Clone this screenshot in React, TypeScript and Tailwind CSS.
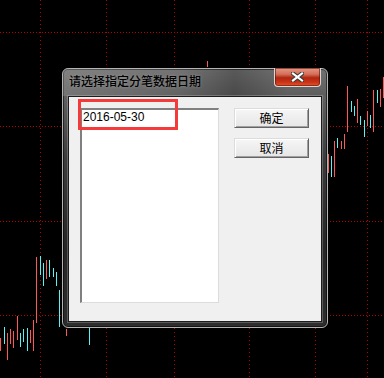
import React from 'react';

type Bar = [number, number, number, 'r' | 'c'];

// candlestick wicks seen around the dialog: x, top, bottom, colour
const bars: Bar[] = [
  [0, 338, 351, 'r'],
  [4, 327, 344, 'c'],
  [7, 333, 360, 'r'],
  [10, 329, 344, 'r'],
  [13, 331, 348, 'r'],
  [17, 316, 340, 'r'],
  [20, 333, 347, 'c'],
  [23, 329, 342, 'c'],
  [27, 328, 351, 'c'],
  [30, 330, 343, 'r'],
  [33, 320, 351, 'r'],
  [36, 257, 323, 'r'],
  [40, 256, 275, 'c'],
  [43, 263, 286, 'c'],
  [46, 260, 279, 'r'],
  [49, 260, 277, 'c'],
  [53, 268, 277, 'c'],
  [56, 272, 286, 'c'],
  [59, 290, 327, 'c'],
  [66, 329, 336, 'r'],
  [89, 328, 345, 'c'],
  [207, 61, 67, 'r'],
  [328, 154, 173, 'r'],
  [331, 156, 177, 'c'],
  [334, 141, 177, 'r'],
  [337, 138, 148, 'c'],
  [341, 141, 149, 'r'],
  [344, 134, 149, 'r'],
  [347, 86, 132, 'r'],
  [351, 101, 112, 'c'],
  [354, 106, 116, 'c'],
  [357, 99, 123, 'r'],
  [360, 116, 125, 'c'],
  [364, 120, 137, 'c'],
  [367, 111, 126, 'r'],
  [370, 115, 128, 'c'],
  [373, 90, 132, 'r'],
  [377, 90, 103, 'c'],
  [380, 89, 107, 'r'],
  [383, 77, 98, 'r'],
];

const hLines = [32, 126, 221, 315];
const vLines = [40, 106, 174, 249, 315, 367];

const Chart = () => (
  <svg className="absolute inset-0" width={384} height={378} viewBox="0 0 384 378">
    {hLines.map((y) => (
      <line key={'h' + y} x1={0} x2={384} y1={y + 0.5} y2={y + 0.5} stroke="#b80000" strokeDasharray="1 2" />
    ))}
    {vLines.map((x) => (
      <line key={'v' + x} x1={x + 0.5} x2={x + 0.5} y1={0} y2={378} stroke="#b80000" strokeDasharray="1 3" />
    ))}
    {bars.map(([x, y1, y2, c], i) => (
      <rect key={i} x={x} y={y1} width={1} height={y2 - y1} fill={c === 'r' ? '#ff5656' : '#55f4f4'} />
    ))}
  </svg>
);

const WinButton = ({ label }: { label: string }) => (
  <button className="flex h-[20px] w-[75px] items-center justify-center border border-t-[#dcdcdc] border-l-[#dcdcdc] border-r-[#646464] border-b-[#646464] bg-gradient-to-b from-[#f6f6f6] to-[#e6e6e6] shadow-[inset_1px_1px_0_#ffffff,inset_-1px_-1px_0_#a0a0a0] font-['Noto_Sans_CJK_SC',sans-serif] text-[12px] leading-[12px] text-black">
    {label}
  </button>
);

export default function App() {
  return (
    <div className="relative h-[378px] w-[384px] overflow-hidden bg-black">
      <Chart />

      {/* dialog */}
      <div className="absolute left-[62px] top-[68px] flex h-[260px] w-[266px] flex-col rounded-[6px] border border-[#b4b4b4] bg-[linear-gradient(to_bottom,#777777_0%,#5e5e5e_12%,#3c3c3c_35%,#262626_70%,#2e2e2e_100%)] shadow-[inset_0_0_0_1px_rgba(0,0,0,0.55)]">
        <div className="flex h-[27px] items-start rounded-t-[5px] bg-[linear-gradient(to_right,rgba(150,150,150,0.35),rgba(100,100,100,0.2)_45%,rgba(0,0,0,0.25)_65%,rgba(60,60,60,0.1)_85%)]">
          <span className="pl-[6px] pt-[6px] font-['Noto_Sans_CJK_SC',sans-serif] text-[12px] font-medium leading-[12px] text-black [text-shadow:0_0_3px_rgba(255,255,255,0.3)]">
            请选择指定分笔数据日期
          </span>
          <button className="-mt-px mr-[6px] ml-auto flex h-[19px] w-[47px] items-center justify-center rounded-b-[4px] border border-t-0 border-[#d8d8d8] bg-[linear-gradient(to_bottom,#e49a88_0%,#d46e58_35%,#b0260f_55%,#cc3518_80%,#e8552c_100%)] shadow-[inset_0_0_0_1px_rgba(90,20,10,0.6)]">
            <svg width="13" height="10" viewBox="0 0 13 10">
              <path d="M2 1.5 L11 8.5 M11 1.5 L2 8.5" stroke="#3a3a3a" strokeWidth="4.2" strokeLinecap="square" />
              <path d="M2 1.5 L11 8.5 M11 1.5 L2 8.5" stroke="#ffffff" strokeWidth="2.2" strokeLinecap="square" />
            </svg>
          </button>
        </div>

        <div className="relative mx-[5px] mb-[5px] flex flex-1 gap-[15px] border border-[#1c1c1c] bg-[#f0f0f0] p-[11px] shadow-[0_0_0_1px_rgba(255,255,255,0.22)]">
          <div className="h-[195px] w-[139px] border-t-2 border-l-2 border-r border-b border-t-[#808080] border-l-[#808080] border-r-[#dcdcdc] border-b-[#dcdcdc] bg-white pl-[1px] font-['Liberation_Sans',Arial,sans-serif] text-[12px] leading-[14px] text-black">
            2016-05-30
          </div>
          <div className="flex flex-col gap-[10px]">
            <WinButton label="确定" />
            <WinButton label="取消" />
          </div>

          {/* annotation box */}
          <div className="absolute left-[9px] top-[2px] h-[31px] w-[100px] border-[3px] border-[#f53a3a]" />
        </div>
      </div>
    </div>
  );
}
